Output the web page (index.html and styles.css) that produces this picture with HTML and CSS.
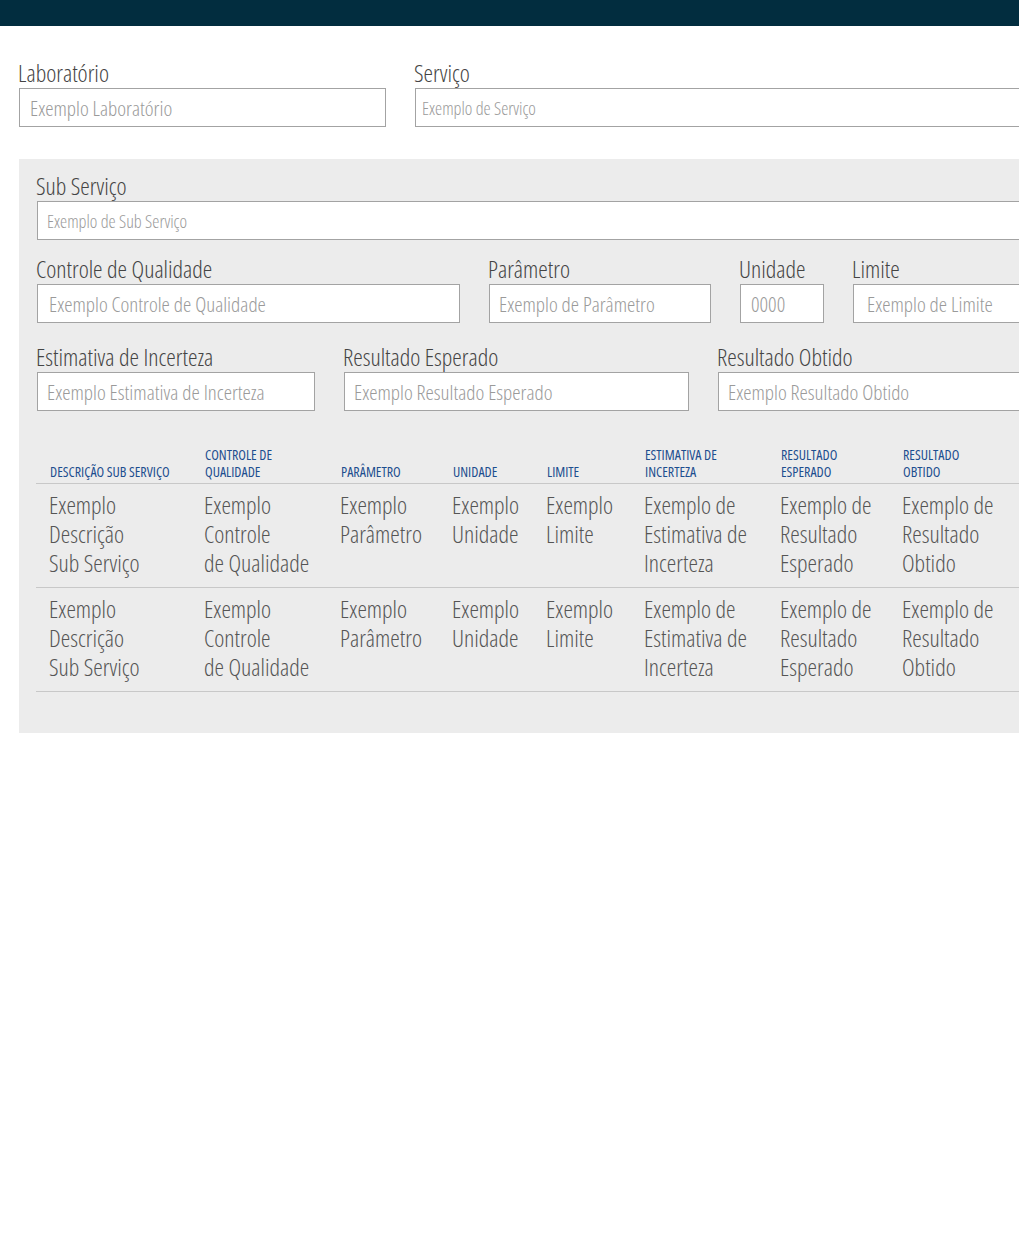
FILE: index.html
```html
<!DOCTYPE html>
<html lang="pt">
<head>
<meta charset="utf-8">
<title>Controle</title>
<link rel="stylesheet" href="styles.css">
</head>
<body>
<header class="topbar"></header>
<main class="page">
  <div class="row row-top">
    <div class="field">
      <label class="lbl">Laboratório</label>
      <input class="inp pad-10" placeholder="Exemplo Laboratório">
    </div>
    <div class="field">
      <label class="lbl">Serviço</label>
      <input class="inp inp-small pad-7" placeholder="Exemplo de Serviço">
    </div>
  </div>

  <section class="panel">
    <div class="field">
      <label class="lbl">Sub Serviço</label>
      <input class="inp inp-small" placeholder="Exemplo de Sub Serviço">
    </div>
    <div class="row row-b">
      <div class="field">
        <label class="lbl">Controle de Qualidade</label>
        <input class="inp pad-12" placeholder="Exemplo Controle de Qualidade">
      </div>
      <div class="field">
        <label class="lbl">Parâmetro</label>
        <input class="inp" placeholder="Exemplo de Parâmetro">
      </div>
      <div class="field">
        <label class="lbl">Unidade</label>
        <input class="inp pad-10" placeholder="0000">
      </div>
      <div class="field">
        <label class="lbl">Limite</label>
        <input class="inp pad-14" placeholder="Exemplo de Limite">
      </div>
    </div>
    <div class="row row-c">
      <div class="field">
        <label class="lbl">Estimativa de Incerteza</label>
        <input class="inp" placeholder="Exemplo Estimativa de Incerteza">
      </div>
      <div class="field">
        <label class="lbl">Resultado Esperado</label>
        <input class="inp" placeholder="Exemplo Resultado Esperado">
      </div>
      <div class="field">
        <label class="lbl">Resultado Obtido</label>
        <input class="inp" placeholder="Exemplo Resultado Obtido">
      </div>
    </div>

    <table class="grid">
      <colgroup>
        <col class="c1"><col class="c2"><col class="c3"><col class="c4"><col class="c5"><col class="c6"><col class="c7"><col class="c8">
      </colgroup>
      <thead>
        <tr>
          <th>Descrição Sub Serviço</th>
          <th>Controle de<br>Qualidade</th>
          <th>Parâmetro</th>
          <th>Unidade</th>
          <th>Limite</th>
          <th>Estimativa de<br>Incerteza</th>
          <th>Resultado<br>Esperado</th>
          <th>Resultado<br>Obtido</th>
        </tr>
      </thead>
      <tbody>
        <tr>
          <td>Exemplo<br>Descrição<br>Sub Serviço</td>
          <td>Exemplo<br>Controle<br>de Qualidade</td>
          <td>Exemplo<br>Parâmetro</td>
          <td>Exemplo<br>Unidade</td>
          <td>Exemplo<br>Limite</td>
          <td>Exemplo de<br>Estimativa de<br>Incerteza</td>
          <td>Exemplo de<br>Resultado<br>Esperado</td>
          <td>Exemplo de<br>Resultado<br>Obtido</td>
        </tr>
        <tr>
          <td>Exemplo<br>Descrição<br>Sub Serviço</td>
          <td>Exemplo<br>Controle<br>de Qualidade</td>
          <td>Exemplo<br>Parâmetro</td>
          <td>Exemplo<br>Unidade</td>
          <td>Exemplo<br>Limite</td>
          <td>Exemplo de<br>Estimativa de<br>Incerteza</td>
          <td>Exemplo de<br>Resultado<br>Esperado</td>
          <td>Exemplo de<br>Resultado<br>Obtido</td>
        </tr>
      </tbody>
    </table>
  </section>
</main>
</body>
</html>
```

FILE: styles.css
```css
html, body {
  overflow: hidden;
}
body {
  margin: 0;
  background: #fff;
  font-family: "Open Sans", "Liberation Sans", sans-serif;
  font-stretch: 75%;
  font-weight: 300;
  color: #444;
}
.topbar {
  height: 26px;
  background: #022d3f;
}
.page {
  width: 1080px;
  padding: 32px 0 0 19px;
}
.row {
  display: grid;
  column-gap: 29px;
}
.row-top {
  grid-template-columns: 367px 1fr;
}
.field {
  display: flex;
  flex-direction: column;
  min-width: 0;
}
.lbl {
  font-size: 24px;
  line-height: 29px;
  color: #444;
  margin-left: -1px;
  margin-bottom: 1px;
}
.inp {
  box-sizing: border-box;
  height: 39px;
  border: 1px solid #a3a3a3;
  background: #fff;
  font-family: inherit;
  font-stretch: 75%;
  font-weight: 300;
  font-size: 21px;
  color: #444;
  padding: 0 9px;
  outline: none;
  width: 100%;
}
.inp::placeholder {
  color: #9a9a9a;
}
.inp-small {
  font-size: 18px;
}
.pad-7 { padding-left: 6px; }
.pad-10 { padding-left: 10px; }
.pad-12 { padding-left: 11px; }
.pad-14 { padding-left: 13px; }

.panel {
  margin-top: 32px;
  background: #ececec;
  padding: 12px 0 41px 18px;
}
.row-b {
  grid-template-columns: 423px 222px 84px 1fr;
  margin-top: 14px;
}
.row-c {
  grid-template-columns: 278px 345px 1fr;
  margin-top: 19px;
}
.grid {
  margin-top: 35px;
  margin-left: -1px;
  border-collapse: collapse;
  table-layout: fixed;
  width: 1040px;
}
.c1 { width: 155px; }
.c2 { width: 136px; }
.c3 { width: 112px; }
.c4 { width: 94px; }
.c5 { width: 98px; }
.c6 { width: 136px; }
.c7 { width: 122px; }
.grid th {
  text-align: left;
  vertical-align: bottom;
  font-weight: 400;
  font-size: 14px;
  line-height: 17px;
  text-transform: uppercase;
  color: #1d4e8f;
  padding: 0 4px 3px 14px;
  border-bottom: 1px solid #c8c8c8;
}
.grid td {
  vertical-align: top;
  font-size: 24px;
  line-height: 29px;
  color: #555;
  padding: 6px 4px 10px 13px;
  border-bottom: 1px solid #c8c8c8;
  white-space: nowrap;
}
```
